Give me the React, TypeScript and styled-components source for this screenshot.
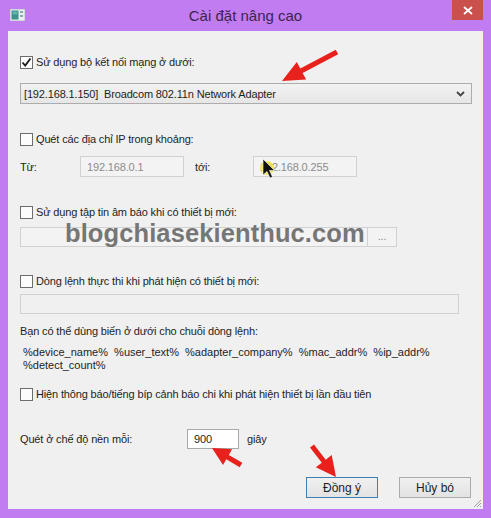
import React from "react";
import styled, { createGlobalStyle } from "styled-components";

const Global = createGlobalStyle`
  html, body { margin: 0; padding: 0; background: #c17cf1; }
  body { font-family: "Liberation Sans", Arial, sans-serif; }
`;

const Window = styled.div`
  position: relative;
  width: 491px;
  height: 518px;
  box-sizing: border-box;
  padding: 0 8px 9px 8px;
  background: #c17cf1;
  display: flex;
  flex-direction: column;
`;

const TitleBar = styled.div`
  height: 31px;
  display: grid;
  grid-template-columns: 1fr auto 1fr;
  align-items: start;
`;

const AppIcon = styled.div`
  justify-self: start;
  margin: 9px 0 0 2px;
  width: 15px;
  height: 12px;
  display: flex;
`;

const Title = styled.div`
  margin-top: 6px;
  font-size: 15px;
  color: #3b2450;
  line-height: 20px;
`;

const CloseButton = styled.div`
  justify-self: end;
  width: 31px;
  height: 20px;
  background: #c9504b;
  color: #fff;
  display: flex;
  align-items: center;
  justify-content: center;
`;

const Body = styled.div`
  position: relative;
  flex: 1;
  background: #f0f0f0;
  padding: 23px 12px 0 12px;
  display: flex;
  flex-direction: column;
  font-size: 11px;
  letter-spacing: -0.15px;
  color: #1e1e1e;
`;

const CheckRow = styled.div<{ $mt: number }>`
  display: flex;
  align-items: center;
  height: 16px;
  margin-top: ${(p) => p.$mt}px;
  gap: 3px;
  white-space: nowrap;
`;

const Box = styled.span`
  width: 13px;
  height: 13px;
  box-sizing: border-box;
  border: 1px solid #6d6d6d;
  background: #fcfcfc;
  display: flex;
  align-items: center;
  justify-content: center;
`;

const Select = styled.div`
  margin-top: 13px;
  width: 452px;
  height: 21px;
  box-sizing: border-box;
  border: 1px solid #acacac;
  background: linear-gradient(#f2f2f2, #e6e6e6);
  display: flex;
  align-items: center;
  justify-content: space-between;
  padding: 0 6px 0 3px;
  white-space: pre;
`;

const RangeRow = styled.div`
  margin-top: 9px;
  height: 21px;
  display: grid;
  grid-template-columns: 60px 104px 69px 104px;
  align-items: center;
`;

const Field = styled.div<{ $w: number; $h: number; $bg?: string; $color?: string }>`
  width: ${(p) => p.$w}px;
  height: ${(p) => p.$h}px;
  box-sizing: border-box;
  border: 1px solid ${(p) => (p.$bg === "#fff" ? "#a9a9a9" : "#d1d1d1")};
  background: ${(p) => p.$bg || "#f3f3f3"};
  color: ${(p) => p.$color || "#1e1e1e"};
  display: flex;
  align-items: center;
  padding-left: 6px;
  white-space: nowrap;
`;

const Label = styled.span<{ $pl?: number }>`
  padding-left: ${(p) => p.$pl || 0}px;
`;

const FileRow = styled.div`
  margin-top: 7px;
  display: flex;
  height: 20px;
`;

const Browse = styled.div`
  width: 29px;
  height: 20px;
  box-sizing: border-box;
  border: 1px solid #d1d1d1;
  border-left: none;
  background: #f3f3f3;
  color: #8a8a8a;
  display: flex;
  align-items: center;
  justify-content: center;
  padding-bottom: 3px;
`;

const CmdField = styled(Field)`
  margin-top: 5px;
  background: #f0f0f0;
`;

const Note = styled.div`
  margin-top: 10px;
  line-height: 14px;
`;

const Vars = styled.div`
  margin-top: 8px;
  padding-left: 3px;
  line-height: 13px;
  letter-spacing: 0;
  white-space: pre;
`;

const IntervalRow = styled.div`
  margin-top: 27px;
  height: 20px;
  display: grid;
  grid-template-columns: 167px 52px auto;
  align-items: center;
`;

const Buttons = styled.div`
  margin-top: 28px;
  display: flex;
  justify-content: flex-end;
  gap: 21px;
`;

const Button = styled.div<{ $def?: boolean }>`
  width: 72px;
  height: 21px;
  box-sizing: border-box;
  border: 1px solid ${(p) => (p.$def ? "#3c7fb1" : "#acacac")};
  background: linear-gradient(#f0f0f0, #e3e3e3);
  display: flex;
  align-items: center;
  justify-content: center;
  font-size: 12px;
  letter-spacing: 0;
`;

const Grip = styled.svg`
  position: absolute;
  right: 1px;
  bottom: 1px;
`;

const Watermark = styled.div`
  position: absolute;
  left: 57px;
  top: 190px;
  font-family: "Liberation Sans", Arial, sans-serif;
  font-weight: bold;
  font-size: 25.5px;
  line-height: 24px;
  color: #767676;
  letter-spacing: 0.1px;
  pointer-events: none;
`;

const Overlay = styled.svg`
  position: absolute;
  left: 0;
  top: 0;
  pointer-events: none;
`;

function arrowPoints(x1: number, y1: number, x2: number, y2: number, head = 20, hw = 10, sw = 2.4) {
  const dx = x2 - x1;
  const dy = y2 - y1;
  const len = Math.hypot(dx, dy);
  const ux = dx / len;
  const uy = dy / len;
  const nx = -uy;
  const ny = ux;
  const bx = x2 - ux * head;
  const by = y2 - uy * head;
  const pts = [
    [x1 + nx * sw, y1 + ny * sw],
    [bx + nx * sw, by + ny * sw],
    [bx + nx * hw, by + ny * hw],
    [x2, y2],
    [bx - nx * hw, by - ny * hw],
    [bx - nx * sw, by - ny * sw],
    [x1 - nx * sw, y1 - ny * sw],
  ];
  return pts.map((p) => p.map((v) => v.toFixed(1)).join(",")).join(" ");
}

const Check = ({ on }: { on?: boolean }) => (
  <Box>
    {on && (
      <svg width="11" height="11" viewBox="0 0 11 11">
        <path d="M1.5 5.5 L4.2 8.5 L9.5 1.5" fill="none" stroke="#1a1a1a" strokeWidth="1.8" />
      </svg>
    )}
  </Box>
);

export default function App() {
  return (
    <>
      <Global />
      <Window>
        <TitleBar>
          <AppIcon>
            <svg width="15" height="12" viewBox="0 0 15 12">
              <rect x="0" y="0" width="15" height="12" fill="#e8eef0" stroke="#9aa" strokeWidth="0.6" />
              <rect x="1.5" y="1.5" width="7" height="9" fill="#3f8f8a" />
              <rect x="2.5" y="2.5" width="5" height="3" fill="#5fb8a8" />
              <rect x="10" y="2" width="3" height="2" fill="#8aa" />
              <rect x="10" y="6" width="3" height="2" fill="#8aa" />
            </svg>
          </AppIcon>
          <Title>Cài đặt nâng cao</Title>
          <CloseButton>
            <svg width="10" height="9" viewBox="0 0 10 9">
              <path d="M1 1 L9 8 M9 1 L1 8" stroke="#fff" strokeWidth="1.8" />
            </svg>
          </CloseButton>
        </TitleBar>
        <Body>
          <CheckRow $mt={0}>
            <Check on />
            <span>Sử dụng bộ kết nối mạng ở dưới:</span>
          </CheckRow>
          <Select>
            <span>[192.168.1.150]  Broadcom 802.11n Network Adapter</span>
            <svg width="9" height="6" viewBox="0 0 9 6">
              <path d="M1 1 L4.5 4.5 L8 1" fill="none" stroke="#444" strokeWidth="1.8" />
            </svg>
          </Select>
          <CheckRow $mt={27}>
            <Check />
            <span>Quét các địa chỉ IP trong khoảng:</span>
          </CheckRow>
          <RangeRow>
            <Label>Từ:</Label>
            <Field $w={104} $h={21} $color="#8c8c8c">192.168.0.1</Field>
            <Label $pl={11}>tới:</Label>
            <Field $w={104} $h={21} $color="#8c8c8c">192.168.0.255</Field>
          </RangeRow>
          <CheckRow $mt={27}>
            <Check />
            <span>Sử dụng tập tin âm báo khi có thiết bị mới:</span>
          </CheckRow>
          <FileRow>
            <Field $w={348} $h={20} />
            <Browse>...</Browse>
          </FileRow>
          <CheckRow $mt={26}>
            <Check />
            <span>Dòng lệnh thực thi khi phát hiện có thiết bị mới:</span>
          </CheckRow>
          <CmdField $w={439} $h={20} />
          <Note>Bạn có thể dùng biến ở dưới cho chuỗi dòng lệnh:</Note>
          <Vars>
            {"%device_name%  %user_text%  %adapter_company%  %mac_addr%  %ip_addr%"}
            <br />
            {"%detect_count%"}
          </Vars>
          <CheckRow $mt={14}>
            <Check />
            <span>Hiện thông báo/tiếng bíp cảnh báo chi khi phát hiện thiết bị lần đầu tiên</span>
          </CheckRow>
          <IntervalRow>
            <Label>Quét ở chế độ nền mỗi:</Label>
            <Field $w={52} $h={20} $bg="#fff">900</Field>
            <Label $pl={8}>giây</Label>
          </IntervalRow>
          <Buttons>
            <Button $def>Đồng ý</Button>
            <Button>Hủy bó</Button>
          </Buttons>
          <Watermark>blogchiasekienthuc.com</Watermark>
          <Grip width="10" height="10" viewBox="0 0 10 10">
            <path d="M9 2 L2 9 M9 5 L5 9 M9 8 L8 9" stroke="#a0a0a0" strokeWidth="1" />
          </Grip>
        </Body>
        <Overlay width="491" height="518" viewBox="0 0 491 518">
          <polygon points={arrowPoints(337, 52, 282, 81, 22, 10, 2.5)} fill="#e8211d" />
          <polygon points={arrowPoints(241, 465, 212, 448, 18, 9, 2.5)} fill="#e8211d" />
          <polygon points={arrowPoints(312, 446, 336, 477, 20, 10, 2.5)} fill="#e8211d" />
          <circle cx="267" cy="168" r="7" fill="#f2e23a" opacity="0.85" />
          <path
            d="M263 159 L263 175 L267 171.5 L270 178 L272.5 177 L269.5 170.5 L274.5 170.5 Z"
            fill="#111"
            stroke="#fff"
            strokeWidth="0.6"
          />
        </Overlay>
      </Window>
    </>
  );
}
